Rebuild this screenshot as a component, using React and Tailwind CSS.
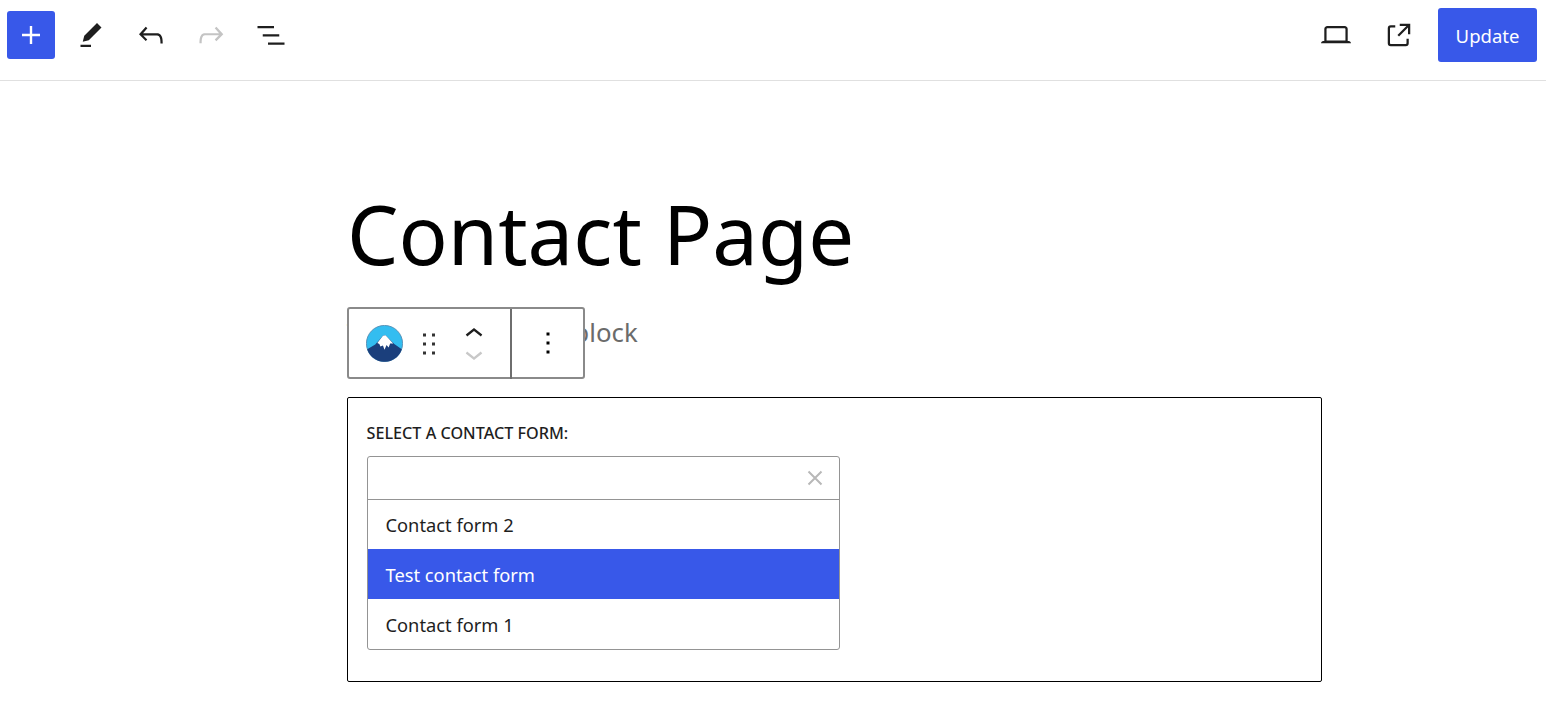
import React from 'react';

const Icon = ({ d, size = 36, className = '' }) => (
    <svg viewBox="0 0 24 24" width={size} height={size} fill="currentColor" className={className}>
        <path d={d} />
    </svg>
);

const icons = {
    plus: 'M18 11.2h-5.2V6h-1.6v5.2H6v1.6h5.2V18h1.6v-5.2H18z',
    pencil: 'm19 7-3-3-8.5 8.5-1 4 4-1L19 7Zm-7 11.5H5V20h7v-1.5Z',
    undo: 'M18.3 11.7c-.6-.6-1.4-.9-2.3-.9H6.7l2.9-3.3-1.1-1-4.5 5L8.5 16l1-1-2.7-2.7H16c.5 0 .9.2 1.3.5 1 1 1 3.4 1 4.5v.3h1.5v-.2c0-1.5 0-4.3-1.5-5.7z',
    redo: 'M15.6 6.5l-1.1 1 2.9 3.3H8c-.9 0-1.7.3-2.3.9-1.4 1.5-1.4 4.2-1.4 5.6v.2h1.5v-.3c0-1.1 0-3.5 1-4.5.3-.3.7-.5 1.3-.5h9.2L14.5 15l1.1 1.1 4.6-4.6-4.6-5z',
    list: 'M3 6h11v1.5H3V6Zm3.5 5.5h11V13h-11v-1.5ZM21 17H10v1.5h11V17Z',
    laptop: 'M20.5 16h-.7V8c0-1.1-.9-2-2-2H6.2c-1.1 0-2 .9-2 2v8h-.7c-.8 0-1.5.7-1.5 1.5h20c0-.8-.7-1.5-1.5-1.5zM5.7 8c0-.3.2-.5.5-.5h11.6c.3 0 .5.2.5.5v7.6H5.7V8z',
    external: 'M19.5 4.5h-7V6h4.44l-5.97 5.97 1.06 1.06L18 7.06v4.44h1.5v-7Zm-13 1a2 2 0 0 0-2 2v10a2 2 0 0 0 2 2h10a2 2 0 0 0 2-2v-3H17v3a.5.5 0 0 1-.5.5h-10a.5.5 0 0 1-.5-.5v-10a.5.5 0 0 1 .5-.5h3V5.5h-3Z',
    drag: 'M8 7h2V5H8v2zm0 6h2v-2H8v2zm0 6h2v-2H8v2zm6-14v2h2V5h-2zm0 8h2v-2h-2v2zm0 6h2v-2h-2v2z',
    up: 'M6.5 12.4L12 8l5.5 4.4-.9 1.2L12 10l-4.5 3.6-1-1.2z',
    down: 'M17.5 11.6L12 16l-5.5-4.4.9-1.2L12 14l4.5-3.6 1 1.2z',
    more: 'M13 19h-2v-2h2v2zm0-6h-2v-2h2v2zm0-6h-2V5h2v2z',
};

const Logo = () => (
    <svg viewBox="0 0 36 36" width={37} height={37} className="-mt-[2px]">
        <circle cx="18" cy="18" r="17.6" fill="#33bdf0" stroke="#4f86ad" strokeWidth="0.8" />
        <path d="M1.2 23.5 L9 19 L16.5 10.5 L19 10 L27.5 18.5 L34.8 23.5 A17.6 17.6 0 0 1 1.2 23.5 Z" fill="#1b3f7c" />
        <path d="M11 17.5 L16.5 10.5 L19 10 L26.5 18 L23.5 18 L22 22 L20 19.5 L18 24 L16.5 20 L14 21 L13 18.5 Z" fill="#fff" />
    </svg>
);

const options = ['Contact form 2', 'Test contact form', 'Contact form 1'];

const App = () => {
    return (
        <div className="min-h-[726px] bg-white text-[#1e1e1e] font-['Noto_Sans','Open_Sans',sans-serif]">
            <header className="h-[81px] flex items-start justify-between border-b border-[#e0e0e0] pl-[7px] pr-[9px] pt-2">
                <div className="flex items-center h-[54px]">
                    <button className="w-12 h-12 rounded-[3px] bg-[#3858e9] text-white flex items-center justify-center">
                        <Icon d={icons.plus} />
                    </button>
                    <div className="flex items-center gap-6 ml-[18px]">
                        <Icon d={icons.pencil} />
                        <Icon d={icons.undo} />
                        <Icon d={icons.redo} className="text-[#c4c4c4]" />
                        <Icon d={icons.list} />
                    </div>
                </div>
                <div className="flex items-center h-[54px]">
                    <Icon d={icons.laptop} />
                    <Icon d={icons.external} className="ml-[27px]" />
                    <button className="ml-[21px] w-[99px] h-[54px] pt-[2px] rounded-[3px] bg-[#3858e9] text-white text-[18.5px]">Update</button>
                </div>
            </header>

            <main className="w-[975px] ml-[347px]">
                <h1 className="pt-[98px] pb-[18px] text-[81.5px] leading-[110px] text-black">Contact Page</h1>
                <div className="relative h-[90px]">
                    <p className="pt-[7px] text-[25.8px] leading-9 text-[#6b6b6b]">Type / to choose a block</p>
                    <div className="absolute left-0 top-0 h-[72px] w-[238px] flex bg-white border-2 border-[#8a8a8a] rounded-[3px]">
                        <div className="flex items-center w-[163px] -mb-[2px] pl-[17px] border-r-2 border-[#6e6e6e]">
                            <Logo />
                            <Icon d={icons.drag} className="ml-[8px] text-[#333]" />
                            <div className="flex flex-col ml-[9px]">
                                <Icon d={icons.up} className="-mb-[13px]" />
                                <Icon d={icons.down} className="text-[#c8c8c8] -mt-[3px]" />
                            </div>
                        </div>
                        <div className="flex-1 flex items-center justify-center">
                            <Icon d={icons.more} className="text-black" />
                        </div>
                    </div>
                </div>

                <section className="h-[285px] border-[1.5px] border-black rounded-[2px] px-[18.5px] pt-[22.5px]">
                    <div className="text-[16.2px] leading-6 font-medium text-[#1e1e1e]">SELECT A CONTACT FORM:</div>
                    <div className="w-[473px] mt-[11px] border border-[#949494] rounded-[3px]">
                        <div className="h-[43px] flex items-center justify-end pr-[16px] border-b border-[#949494] text-[#b8b8b8]">
                            <svg viewBox="0 0 16 16" width={16} height={16} fill="none" stroke="currentColor" strokeWidth="2">
                                <path d="M1.5 1.5 L14.5 14.5 M14.5 1.5 L1.5 14.5" />
                            </svg>
                        </div>
                        {options.map((option, i) => (
                            <div
                                key={option}
                                className={`flex items-center pl-[18px] pt-[2px] text-[18.3px] ${i === 0 ? 'h-[49px]' : 'h-[50px]'} ${i === 1 ? 'bg-[#3858e9] text-white' : ''}`}
                            >
                                {option}
                            </div>
                        ))}
                    </div>
                </section>
            </main>
        </div>
    );
};

export default App;
